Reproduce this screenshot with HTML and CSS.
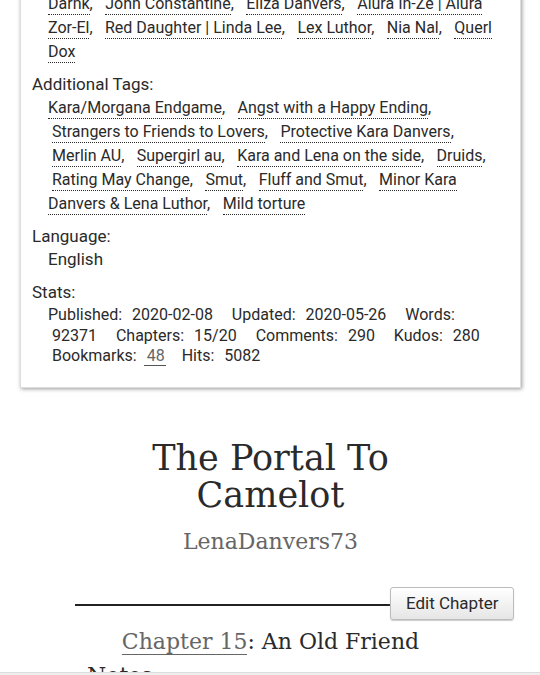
FILE: index.html
```html
<!DOCTYPE html>
<html>
<head>
<meta charset="utf-8">
<link rel="stylesheet" href="styles.css">
</head>
<body>
<div class="page">
  <dl class="meta">
    <dd class="tags">
      <ul class="commas">
        <li><a class="tag">Darnk</a>,</li>
        <li><a class="tag">John Constantine</a>,</li>
        <li><a class="tag">Eliza Danvers</a>,</li>
        <li><a class="tag">Alura In-Ze | Alura Zor-El</a>,</li>
        <li><a class="tag">Red Daughter | Linda Lee</a>,</li>
        <li><a class="tag">Lex Luthor</a>,</li>
        <li><a class="tag">Nia Nal</a>,</li>
        <li><a class="tag">Querl Dox</a></li>
      </ul>
    </dd>
    <dt class="label">Additional Tags:</dt>
    <dd class="tags">
      <ul class="commas">
        <li><a class="tag">Kara/Morgana Endgame</a>,</li>
        <li><a class="tag">Angst with a Happy Ending</a>,</li>
        <li><a class="tag">Strangers to Friends to Lovers</a>,</li>
        <li><a class="tag">Protective Kara Danvers</a>,</li>
        <li><a class="tag">Merlin AU</a>,</li>
        <li><a class="tag">Supergirl au</a>,</li>
        <li><a class="tag">Kara and Lena on the side</a>,</li>
        <li><a class="tag">Druids</a>,</li>
        <li><a class="tag">Rating May Change</a>,</li>
        <li><a class="tag">Smut</a>,</li>
        <li><a class="tag">Fluff and Smut</a>,</li>
        <li><a class="tag">Minor Kara Danvers &amp; Lena Luthor</a>,</li>
        <li><a class="tag">Mild torture</a></li>
      </ul>
    </dd>
    <dt class="label">Language:</dt>
    <dd class="plain">English</dd>
    <dt class="label stats-label">Stats:</dt>
    <dd class="stats">
      <dl class="statlist">
        <dt>Published:</dt> <dd>2020-02-08</dd>
        <dt>Updated:</dt> <dd>2020-05-26</dd>
        <dt>Words:</dt> <dd>92371</dd>
        <dt>Chapters:</dt> <dd>15/20</dd>
        <dt>Comments:</dt> <dd>290</dd>
        <dt>Kudos:</dt> <dd>280</dd>
        <dt>Bookmarks:</dt> <dd class="bm"><a class="blink">48</a></dd>
        <dt>Hits:</dt> <dd>5082</dd>
      </dl>
    </dd>
  </dl>

  <div class="preface">
    <h2 class="title">The Portal To<br>Camelot</h2>
    <h3 class="byline">LenaDanvers73</h3>
  </div>

  <div class="chapter">
    <div class="rule-row">
      <div class="rule"></div>
      <button class="edit">Edit Chapter</button>
    </div>
    <h3 class="chapter-title"><a class="chlink">Chapter 15</a>: An Old Friend</h3>
    <h3 class="notes">Notes:</h3>
  </div>
</div>
<div class="bottombar"></div>
</body>
</html>
```
FILE: styles.css
```css
html, body {
  margin: 0;
  padding: 0;
  background: #fff;
  height: 675px;
  overflow: hidden;
}
body {
  font-family: Roboto, "Liberation Sans", sans-serif;
  color: #2a2a2a;
  position: relative;
}
.page {
  padding: 0 19px 0 20px;
}
.meta {
  margin: -37px 0 0 0;
  padding: 28px 12px 20px 11px;
  border: 1px solid #ddd;
  box-shadow: 1px 1px 4px #999;
  font-size: 16px;
  line-height: 24px;
}
.meta dd {
  margin: 0 0 0 16px;
}
.label {
  font-size: 17px;
  line-height: 24px;
  margin-top: 8px;
}
.stats-label {
  margin-top: 9px;
}
.commas {
  list-style: none;
  margin: 0;
  padding: 0;
}
.commas li {
  display: inline;
  padding-left: 4px;
  margin-right: 4.5px;
}
.commas li:first-child {
  padding-left: 0;
}
.tag {
  color: #2a2a2a;
  border-bottom: 1px dotted #2a2a2a;
  padding-bottom: 1px;
}
.plain {
  font-size: 17px;
  margin-top: -1px !important;
}
.stats {
  font-size: 16px;
  line-height: 20.5px;
  margin-top: 1px !important;
}
.statlist {
  margin: 0;
}
.statlist dt, .statlist dd {
  display: inline;
  margin: 0;
  padding-left: 4px;
}
.statlist dt:first-child {
  padding-left: 0;
}
.statlist dt {
  margin-right: 2px;
}
.statlist dd {
  margin-right: 11px;
}
.statlist dd.bm {
  padding-left: 1px;
  margin-right: 8px;
}
.blink {
  color: #666;
  border-bottom: 1px solid #555;
  padding: 0 1px 0 3px;
}
.preface {
  text-align: center;
  font-family: "DejaVu Serif", "Liberation Serif", serif;
  margin-top: 52px;
}
.title {
  font-weight: normal;
  font-size: 35px;
  line-height: 37px;
  margin: 0;
  color: #2a2a2a;
}
.byline {
  font-weight: normal;
  font-size: 22px;
  line-height: 30px;
  margin: 13px 0 0 0;
  color: #666;
}
.chapter {
  margin-top: 30px;
}
.rule-row {
  display: flex;
  align-items: center;
  padding-left: 55px;
  padding-right: 7px;
}
.rule {
  flex: 1;
  border-top: 2px solid #222;
  margin-top: 4px;
}
.edit {
  font-family: Roboto, "Liberation Sans", sans-serif;
  font-size: 17px;
  color: #2a2a2a;
  background: linear-gradient(#fff, #e6e6e6);
  border: 1px solid #bbb;
  border-radius: 3px;
  box-shadow: 0 1px 1px #ccc;
  padding: 0 14.5px;
  height: 33px;
}
.chapter-title {
  font-family: "DejaVu Serif", "Liberation Serif", serif;
  font-weight: normal;
  font-size: 22px;
  line-height: 30px;
  text-align: center;
  margin: 7px 0 0 0;
  color: #2a2a2a;
}
.chlink {
  color: #666;
  border-bottom: 1px solid #666;
}
.notes {
  font-family: "DejaVu Serif", "Liberation Serif", serif;
  font-weight: normal;
  font-size: 22px;
  margin: 6px 0 0 67px;
}
.bottombar {
  position: absolute;
  left: 0;
  right: 0;
  top: 672px;
  height: 3px;
  background: #eee;
  border-top: 1px solid #ddd;
}
```
